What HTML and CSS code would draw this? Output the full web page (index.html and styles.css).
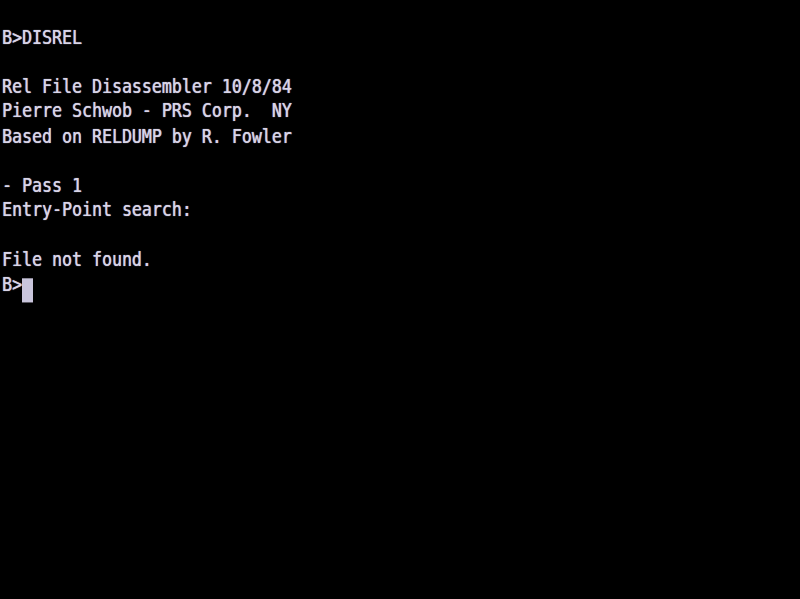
FILE: index.html
```html
<!DOCTYPE html>
<html>
<head>
<meta charset="utf-8">
<link rel="stylesheet" href="styles.css">
</head>
<body>
<pre class="screen">B&gt;DISREL

Rel File Disassembler 10/8/84
Pierre Schwob - PRS Corp.  NY
Based on RELDUMP by R. Fowler

- Pass 1
Entry-Point search:

File not found.
B&gt;<span class="cursor"> </span></pre>
</body>
</html>
```

FILE: styles.css
```css
html, body {
  margin: 0;
  padding: 0;
  background: #000;
  width: 800px;
  height: 599px;
  overflow: hidden;
}
.screen {
  margin: 0;
  padding: 22px 0 0 2px;
  font-family: "DejaVu Sans Mono", "Liberation Mono", monospace;
  font-size: 16.6px;
  line-height: 21.48px;
  color: #d9d5e8;
  text-shadow: 0 0 1px rgba(220, 215, 240, 0.8), 0.4px 0 0 rgba(220, 215, 240, 0.5);
  transform: scaleY(1.15);
  transform-origin: 0 0;
}
.cursor {
  display: inline-block;
  width: 11px;
  height: 21px;
  background: #c9c5dc;
  vertical-align: -5px;
}
```
